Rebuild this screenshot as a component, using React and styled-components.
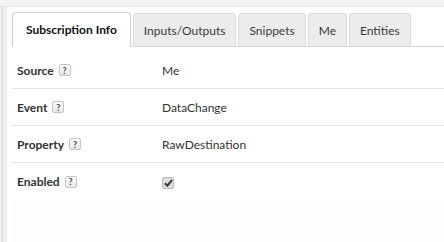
import React from "react";
import styled, { createGlobalStyle } from "styled-components";

const Global = createGlobalStyle`
  html, body { margin: 0; padding: 0; background: #fff; }
  body { font-family: Lato, "Open Sans", sans-serif; font-size: 12px; color: #333; }
`;

const tabs = ["Subscription Info", "Inputs/Outputs", "Snippets", "Me", "Entities"];

const rows = [
  { label: "Source", value: "Me" },
  { label: "Event", value: "DataChange" },
  { label: "Property", value: "RawDestination" },
  { label: "Enabled", check: true },
];

const App = () => {
  return (
    <React.Fragment>
      <Global />
      <Frame>
        <TopStrip />
        <Body>
          <SideRail />
          <Panel>
            <TabBar>
              {tabs.map((t, i) => (
                <Tab key={t} active={i === 0}>{t}</Tab>
              ))}
            </TabBar>
            <Rows>
              {rows.map((r) => (
                <Row key={r.label} last={r.check}>
                  <Label>
                    {r.label}
                    <Help>?</Help>
                  </Label>
                  <Value>
                    {r.check ? (
                      <Check>
                        <svg width="9" height="8" viewBox="0 0 9 8">
                          <path d="M1 4.2 L3.4 6.6 L8 1.2" fill="none" stroke="#333" strokeWidth="2" />
                        </svg>
                      </Check>
                    ) : (
                      r.value
                    )}
                  </Value>
                </Row>
              ))}
            </Rows>
            <Footer />
          </Panel>
        </Body>
      </Frame>
    </React.Fragment>
  );
};

export default App;

const Frame = styled.div`
  width: 444px;
  height: 242px;
  display: flex;
  flex-direction: column;
  overflow: hidden;
`;

const TopStrip = styled.div`
  height: 6px;
  background: #f3f3f3;
  border-bottom: 1px solid #e2e2e2;
  flex: none;
`;

const Body = styled.div`
  flex: 1;
  display: flex;
`;

const SideRail = styled.div`
  width: 7px;
  flex: none;
  background: linear-gradient(to right, #f4f4f4 0, #f4f4f4 1px, #d6d6d6 2px, #ececec 3px, #f7f7f7 5px, #e4e4e4 7px);
`;

const Panel = styled.div`
  flex: 1;
  display: flex;
  flex-direction: column;
  padding-left: 5px;
`;

const TabBar = styled.div`
  display: flex;
  align-items: flex-end;
  gap: 2px;
  margin-top: 5px;
  height: 34px;
  border-bottom: 1px solid #d4d4d4;
`;

const Tab = styled.div`
  box-sizing: border-box;
  padding: 0 ${(p) => (p.active ? "13px" : "10px")};
  display: flex;
  align-items: center;
  border: 1px solid ${(p) => (p.active ? "#cfcfcf" : "#dadada")};
  border-bottom: none;
  border-radius: 4px 4px 0 0;
  background: ${(p) => (p.active ? "#fff" : "#ececec")};
  color: ${(p) => (p.active ? "#111" : "#3a3a3a")};
  font-weight: ${(p) => (p.active ? 700 : 400)};
  margin-bottom: ${(p) => (p.active ? "-1px" : "0")};
  height: ${(p) => (p.active ? "35px" : "33px")};
  padding-bottom: ${(p) => (p.active ? "2px" : "0")};
  white-space: nowrap;
`;

const Rows = styled.div`
  display: flex;
  flex-direction: column;
  padding-top: 5px;
`;

const Row = styled.div`
  height: 37px;
  box-sizing: border-box;
  display: flex;
  align-items: center;
  border-bottom: ${(p) => (p.last ? "none" : "1px solid #e3e3e3")};
`;

const Label = styled.div`
  width: 145px;
  padding-left: 5px;
  display: flex;
  align-items: center;
  gap: 5px;
  font-weight: 700;
  color: #333;
`;

const Help = styled.span`
  width: 12px;
  height: 12px;
  box-sizing: border-box;
  display: inline-flex;
  align-items: center;
  justify-content: center;
  border: 1px solid #c4c4c4;
  border-radius: 2px;
  background: linear-gradient(#fdfdfd, #e6e6e6);
  font-size: 9px;
  font-weight: 700;
  color: #444;
`;

const Value = styled.div`
  color: #333;
`;

const Check = styled.span`
  width: 12px;
  height: 12px;
  box-sizing: border-box;
  display: inline-flex;
  align-items: center;
  justify-content: center;
  border: 1px solid #b8b8b8;
  border-radius: 2px;
  background: #dcdcdc;
  margin-top: 4px;
`;

const Footer = styled.div`
  flex: 1;
  background: #fdfdfd;
`;
